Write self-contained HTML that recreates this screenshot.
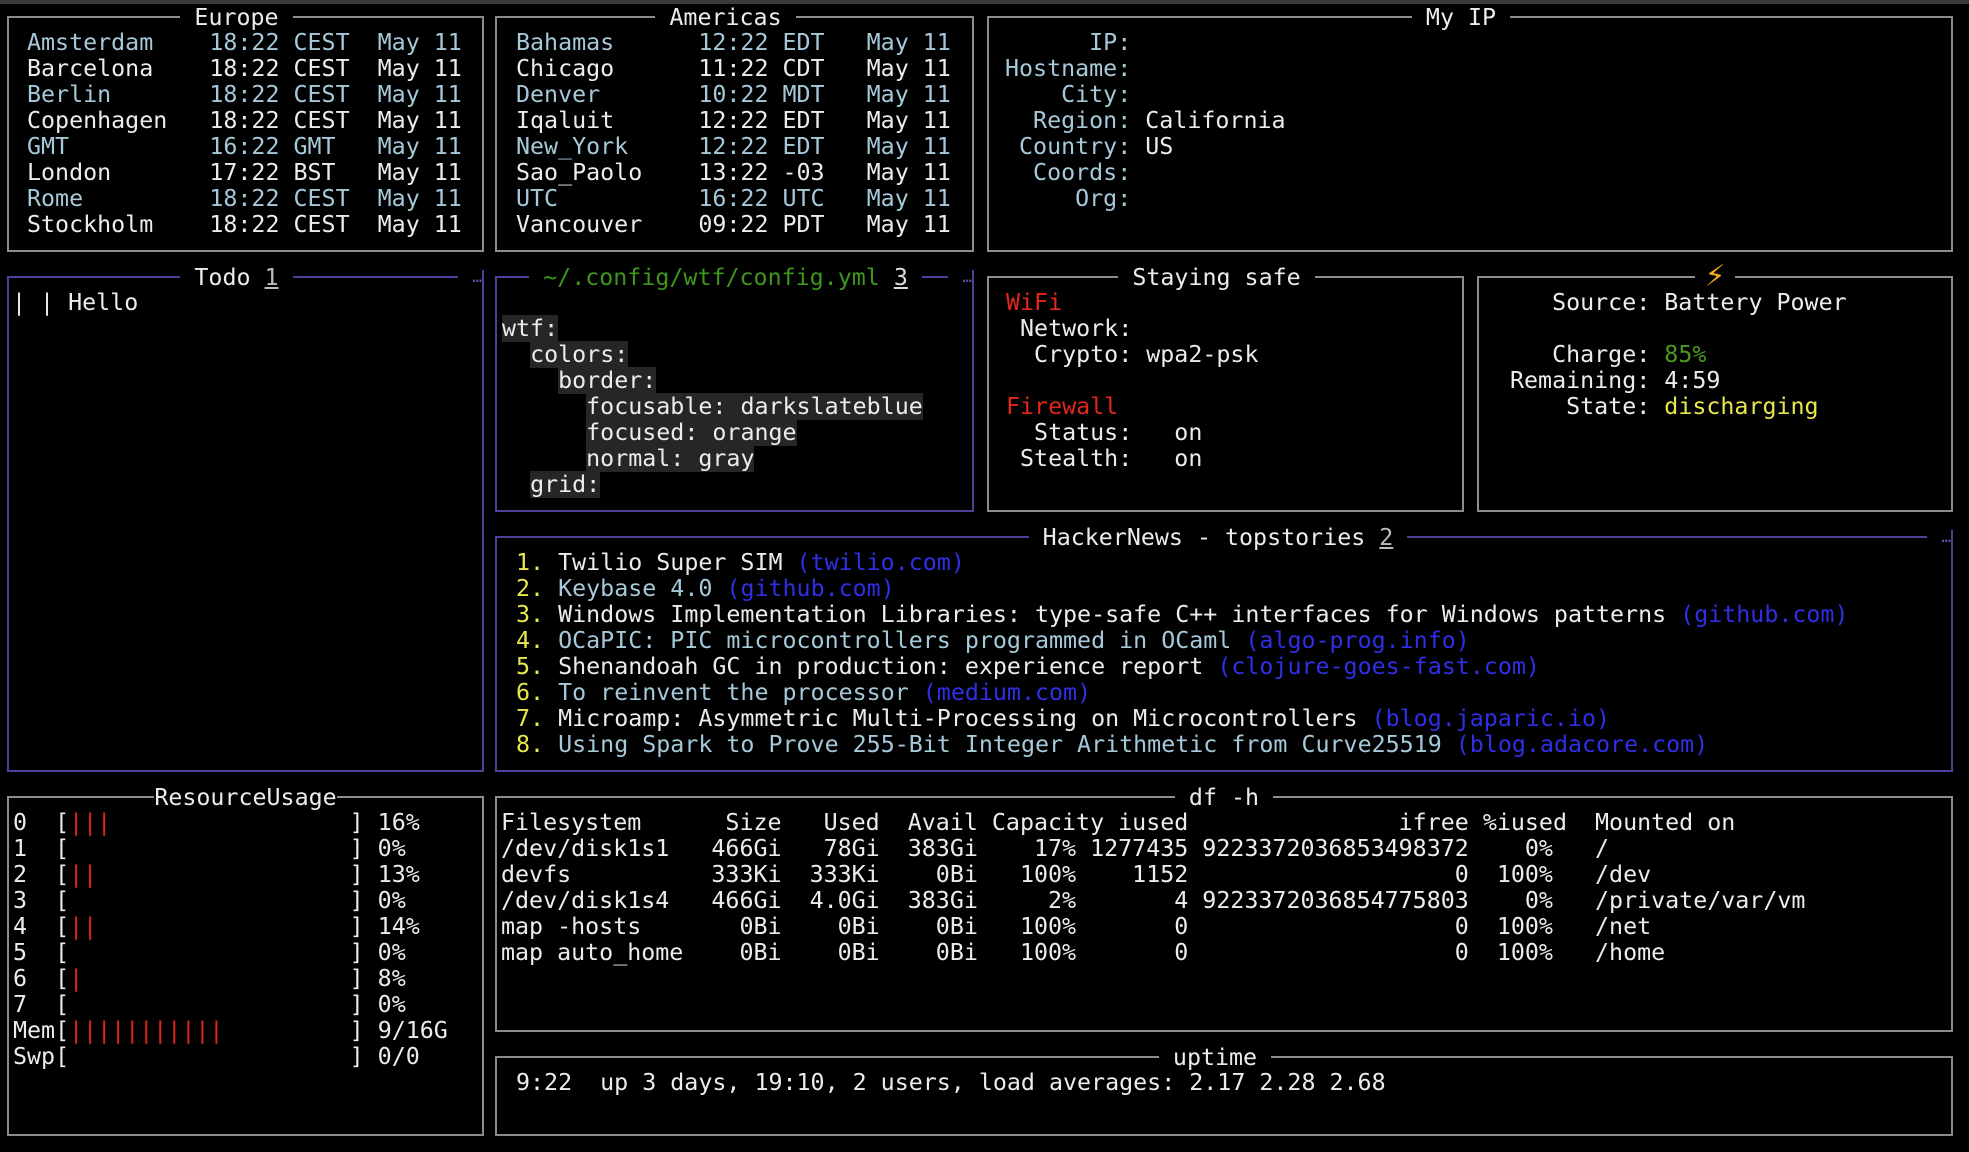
<!DOCTYPE html>
<html><head><meta charset="utf-8"><style>
*{margin:0;padding:0;box-sizing:border-box}
body{width:1969px;height:1152px;background:#000;position:relative;overflow:hidden;font-family:"DejaVu Sans Mono","Liberation Mono",monospace;font-size:23.3px;color:#ececec}
.bar{position:absolute;left:0;top:0;width:1969px;height:4px;background:#3a3a3a}
.box{position:absolute;border:2px solid #8c8c8c}
.p{border-color:#4a4296}
.t{position:absolute;top:-13px;left:-18px;right:0;text-align:center;line-height:26px;height:26px}
.t span{background:#000;padding:0 14px;white-space:pre}
.t.np span{padding:0}
.t.c{left:0}
.el{position:absolute;right:-2px;top:-8px;width:26px;height:14px;background:#000;color:#5b53b0;font-size:16px;line-height:14px;text-align:right;border-right:2px solid #4a4296}
.tx{position:absolute;white-space:pre;line-height:26px}
.lb{color:#a6c9da}.y{color:#e8e84a}.g{color:#4a9a1e}.r{color:#e2261c}.b{color:#2f2fe6}.u{text-decoration:underline;color:#bbb}
.hl{background:#262626}
</style></head><body>
<div class="bar"></div>

<div class="box" style="left:7px;top:16px;width:477px;height:236px"><div class="t"><span>Europe</span></div></div>
<div class="tx" style="left:27px;top:30px"><span class="lb">Amsterdam    18:22 CEST  May 11</span>
Barcelona    18:22 CEST  May 11
<span class="lb">Berlin       18:22 CEST  May 11</span>
Copenhagen   18:22 CEST  May 11
<span class="lb">GMT          16:22 GMT   May 11</span>
London       17:22 BST   May 11
<span class="lb">Rome         18:22 CEST  May 11</span>
Stockholm    18:22 CEST  May 11</div>

<div class="box" style="left:495px;top:16px;width:479px;height:236px"><div class="t"><span>Americas</span></div></div>
<div class="tx" style="left:516px;top:30px"><span class="lb">Bahamas      12:22 EDT   May 11</span>
Chicago      11:22 CDT   May 11
<span class="lb">Denver       10:22 MDT   May 11</span>
Iqaluit      12:22 EDT   May 11
<span class="lb">New_York     12:22 EDT   May 11</span>
Sao_Paolo    13:22 -03   May 11
<span class="lb">UTC          16:22 UTC   May 11</span>
Vancouver    09:22 PDT   May 11</div>

<div class="box" style="left:987px;top:16px;width:966px;height:236px"><div class="t"><span>My IP</span></div></div>
<div class="tx" style="left:1005px;top:30px"><span class="lb">      IP:</span>
<span class="lb">Hostname:</span>
<span class="lb">    City:</span>
<span class="lb">  Region:</span> California
<span class="lb"> Country:</span> US
<span class="lb">  Coords:</span>
<span class="lb">     Org:</span></div>

<div class="box p" style="left:7px;top:276px;width:477px;height:496px"><div class="t"><span>Todo <span class="u" style="padding:0">1</span></span></div><div class="el">…</div></div>
<div class="tx" style="left:12px;top:290px">| | Hello</div>

<div class="box p" style="left:495px;top:276px;width:479px;height:236px"><div class="t"><span style="color:#3f961c">~/.config/wtf/config.yml <span class="u" style="padding:0;color:#ddd">3</span></span></div><div class="el">…</div></div>
<div class="tx" style="left:502px;top:316px"><span class="hl">wtf:</span>
  <span class="hl">colors:</span>
    <span class="hl">border:</span>
      <span class="hl">focusable: darkslateblue</span>
      <span class="hl">focused: orange</span>
      <span class="hl">normal: gray</span>
  <span class="hl">grid:</span></div>

<div class="box" style="left:987px;top:276px;width:477px;height:236px"><div class="t"><span>Staying safe</span></div></div>
<div class="tx" style="left:1006px;top:290px"><span class="r">WiFi</span>
 Network:
  Crypto: wpa2-psk

<span class="r">Firewall</span>
  Status:   on
 Stealth:   on</div>

<div class="box" style="left:1477px;top:276px;width:476px;height:236px"><div class="t c" style="top:-20px;height:34px;line-height:34px"><span style="color:#f2a623;font-size:34px;padding:0 10px">⚡</span></div></div>
<div class="tx" style="left:1510px;top:290px">   Source: Battery Power

   Charge: <span class="g">85%</span>
Remaining: 4:59
    State: <span class="y">discharging</span></div>

<div class="box p" style="left:495px;top:536px;width:1458px;height:236px"><div class="t" style="left:-12px"><span>HackerNews - topstories <span class="u" style="padding:0">2</span></span></div><div class="el">…</div></div>
<div class="tx" style="left:516px;top:550px"><span class="y">1.</span> Twilio Super SIM <span class="b">(twilio.com)</span>
<span class="y">2.</span> <span class="lb">Keybase 4.0</span> <span class="b">(github.com)</span>
<span class="y">3.</span> Windows Implementation Libraries: type-safe C++ interfaces for Windows patterns <span class="b">(github.com)</span>
<span class="y">4.</span> <span class="lb">OCaPIC: PIC microcontrollers programmed in OCaml</span> <span class="b">(algo-prog.info)</span>
<span class="y">5.</span> Shenandoah GC in production: experience report <span class="b">(clojure-goes-fast.com)</span>
<span class="y">6.</span> <span class="lb">To reinvent the processor</span> <span class="b">(medium.com)</span>
<span class="y">7.</span> Microamp: Asymmetric Multi-Processing on Microcontrollers <span class="b">(blog.japaric.io)</span>
<span class="y">8.</span> <span class="lb">Using Spark to Prove 255-Bit Integer Arithmetic from Curve25519</span> <span class="b">(blog.adacore.com)</span></div>

<div class="box" style="left:7px;top:796px;width:477px;height:340px"><div class="t np c"><span>ResourceUsage</span></div></div>
<div class="tx" style="left:13px;top:810px">0  [<span class="r">|||</span>                 ] 16%
1  [                    ] 0%
2  [<span class="r">||</span>                  ] 13%
3  [                    ] 0%
4  [<span class="r">||</span>                  ] 14%
5  [                    ] 0%
6  [<span class="r">|</span>                   ] 8%
7  [                    ] 0%
Mem[<span class="r">|||||||||||</span>         ] 9/16G
Swp[                    ] 0/0</div>

<div class="box" style="left:495px;top:796px;width:1458px;height:236px"><div class="t c"><span>df -h</span></div></div>
<div class="tx" style="left:501px;top:810px">Filesystem      Size   Used  Avail Capacity iused               ifree %iused  Mounted on
/dev/disk1s1   466Gi   78Gi  383Gi    17% 1277435 9223372036853498372    0%   /
devfs          333Ki  333Ki    0Bi   100%    1152                   0  100%   /dev
/dev/disk1s4   466Gi  4.0Gi  383Gi     2%       4 9223372036854775803    0%   /private/var/vm
map -hosts       0Bi    0Bi    0Bi   100%       0                   0  100%   /net
map auto_home    0Bi    0Bi    0Bi   100%       0                   0  100%   /home</div>

<div class="box" style="left:495px;top:1056px;width:1458px;height:80px"><div class="t"><span>uptime</span></div></div>
<div class="tx" style="left:516px;top:1070px">9:22  up 3 days, 19:10, 2 users, load averages: 2.17 2.28 2.68</div>
</body></html>
